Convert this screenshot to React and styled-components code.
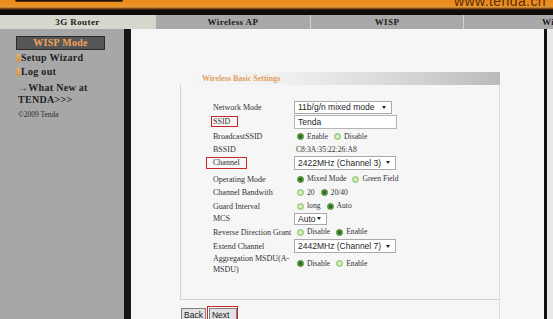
import React from "react";
import styled, { createGlobalStyle } from "styled-components";

const Global = createGlobalStyle`
  html, body { margin: 0; padding: 0; background: #f6f6f6; overflow: hidden; }
  body { font-family: "Liberation Serif", "Times New Roman", serif; }
  * { box-sizing: border-box; }
`;

const Page = styled.div`
  width: 553px;
  height: 319px;
  overflow: hidden;
  display: flex;
  flex-direction: column;
`;

const TopBanner = styled.div`
  height: 7px;
  flex: none;
  display: flex;
  align-items: flex-end;
  overflow: hidden;
  background: linear-gradient(180deg, #e98a1c 0%, #ec8f22 60%, #e7952f 100%);
`;

const LogoTab = styled.div`
  align-self: flex-start;
  margin-left: 15px;
  width: 108px;
  height: 2px;
  background: #1d1410;
  border: 1px solid #5a3210;
  border-top: none;
  border-radius: 0 0 4px 4px;
`;

const SiteUrl = styled.div`
  margin-left: auto;
  margin-right: 7px;
  font-family: "Liberation Sans", Arial, sans-serif;
  font-size: 14px;
  line-height: 12px;
  height: 12px;
  color: #5b2c06;
  letter-spacing: 0.4px;
  margin-bottom: 0px;
`;

const BlendBand = styled.div`
  height: 3px;
  flex: none;
  background: linear-gradient(180deg, #e0a040 0%, #6a3a10 60%, #1a120c 100%);
`;

const DarkBand = styled.div`
  height: 5px;
  flex: none;
  background: #0f0d0c;
`;

const TabBar = styled.div`
  height: 14px;
  flex: none;
  display: grid;
  grid-template-columns: 155px 155px 153px 1fr;
`;

const Tab = styled.div`
  background: ${(p) => (p.$active ? "#d7d7cd" : "#a9a9a9")};
  border-left: ${(p) => (p.$first ? "none" : "1px solid #d2d2d2")};
  color: #1c1c1c;
  font-weight: bold;
  font-size: 9px;
  letter-spacing: 0.4px;
  line-height: 14px;
  white-space: nowrap;
  overflow: hidden;
  padding-left: ${(p) => (p.$last ? "78px" : "0")};
  text-align: ${(p) => (p.$last ? "left" : "center")};
`;

const Body = styled.div`
  flex: 1;
  display: flex;
  min-height: 0;
`;

const Sidebar = styled.div`
  width: 124px;
  flex: none;
  background: #a7a7a7;
  padding: 7px 0 0 16px;
  display: flex;
  flex-direction: column;
  align-items: flex-start;
`;

const ModeBox = styled.div`
  width: 89px;
  height: 14px;
  background: #565656;
  border: 1px solid #2b2b2b;
  color: #f2a35a;
  font-weight: bold;
  font-size: 10px;
  letter-spacing: 0.3px;
  line-height: 12px;
  text-align: center;
`;

const NavLink = styled.div`
  display: flex;
  align-items: center;
  font-weight: bold;
  font-size: 10px;
  line-height: ${(p) => p.$lh || "14px"};
  margin-top: ${(p) => p.$mt || "0"};
  margin-left: ${(p) => p.$ml || "1px"};
  color: #1e1e1e;
  letter-spacing: 0.3px;
  white-space: nowrap;
`;

const Bullet = styled.span`
  width: 3px;
  height: 8px;
  background: linear-gradient(180deg, #f3b45a, #e48a2a);
  margin-right: 1px;
`;

const Copy = styled.div`
  margin: 3px 0 0 2px;
  font-size: 7.5px;
  line-height: 12px;
  color: #2a2a2a;
`;

const SideDivider = styled.div`
  width: 7px;
  flex: none;
  background: #161616;
`;

const Main = styled.div`
  flex: 1;
  background: #f6f6f6;
  padding: 43px 0 0 49px;
  display: flex;
  flex-direction: column;
`;

const RightRule = styled.div`
  width: 3px;
  flex: none;
  background: #121212;
`;

const RightStrip = styled.div`
  width: 6px;
  flex: none;
  background: #e9e9e9;
`;

const Panel = styled.div`
  width: 320px;
  flex: 1;
  display: flex;
  flex-direction: column;
`;

const PanelHeader = styled.div`
  height: 13px;
  background: linear-gradient(90deg, #f7f7f7 0%, #efefef 35%, #d2d2d2 75%, #bababa 100%);
  color: #e29c5c;
  font-weight: bold;
  font-size: 8px;
  line-height: 13px;
  padding-left: 22px;
  white-space: nowrap;
`;

const PanelBody = styled.div`
  border-left: 1px solid #d3d3d3;
  border-right: 1px solid #dedede;
  border-bottom: 1px solid #d3d3d3;
  padding: 15px 0 23px 32px;
`;

const FormRow = styled.div`
  display: grid;
  grid-template-columns: 81px 1fr;
  align-items: center;
  height: ${(p) => p.$h}px;
`;

const Label = styled.div`
  font-size: 8px;
  line-height: 11px;
  color: #333;
  white-space: ${(p) => (p.$wrap ? "normal" : "nowrap")};
`;

const RedBox = styled.span`
  display: inline-block;
  border: 1.5px solid #c4262a;
  margin-left: ${(p) => p.$ml}px;
  padding: 0 ${(p) => p.$pr}px 0 ${(p) => p.$pl}px;
  line-height: ${(p) => p.$lh}px;
`;

const Select = styled.div`
  width: ${(p) => p.$w}px;
  height: ${(p) => p.$h}px;
  background: #fff;
  border: 1px solid #a9a9a9;
  display: flex;
  align-items: center;
  justify-content: space-between;
  padding: 0 5px 0 3px;
  font-family: "Liberation Sans", Arial, sans-serif;
  font-size: 8.5px;
  color: #1f1f1f;
  white-space: nowrap;
`;

const Caret = styled.span`
  width: 0;
  height: 0;
  border-left: 2.5px solid transparent;
  border-right: 2.5px solid transparent;
  border-top: 3px solid #222;
`;

const TextInput = styled.div`
  width: 103px;
  height: 14px;
  background: #fff;
  border: 1px solid #b5b5b5;
  padding-left: 3px;
  font-family: "Liberation Sans", Arial, sans-serif;
  font-size: 8.5px;
  line-height: 12px;
  color: #1f1f1f;
`;

const RadioGroup = styled.div`
  display: flex;
  align-items: center;
  padding-left: 3px;
`;

const Radio = styled.span`
  width: 7px;
  height: 7px;
  border-radius: 50%;
  flex: none;
  margin-right: 3px;
  background: ${(p) =>
    p.$checked
      ? "radial-gradient(circle, #2f6a20 0 1.4px, #5aa63a 2px, #4a9432 100%)"
      : "radial-gradient(circle, #d9f0c8 0 1.2px, #a9d68a 2.4px, #98cb76 100%)"};
  border: 1px solid ${(p) => (p.$checked ? "#3f7f2b" : "#8fc56c")};
`;

const RadioText = styled.span`
  font-size: 7.6px;
  line-height: 10px;
  color: #333;
  margin-right: 6px;
  white-space: nowrap;
`;

const Plain = styled.div`
  font-size: 7.6px;
  line-height: 10px;
  color: #333;
  padding-left: 2px;
`;

const Footer = styled.div`
  flex: 1;
  border-right: 1px solid #dedede;
  padding: 6px 0 0 1px;
  display: flex;
  align-items: flex-start;
`;

const Button = styled.div`
  height: 14px;
  padding: 0 2px;
  background: #e2e2e2;
  border: 1px solid #808080;
  font-family: "Liberation Sans", Arial, sans-serif;
  font-size: 8.5px;
  line-height: 12px;
  color: #1a1a1a;
  margin-top: ${(p) => p.$mt || "0"};
`;

const NextMark = styled.div`
  margin-left: 1px;
  width: 31px;
  height: 16px;
  border: 1.5px solid #c4262a;
  padding: 1px 0 0 1px;
  background: #fff;
`;

function Choice({ options, checked }) {
  return (
    <RadioGroup>
      {options.map((o, i) => (
        <React.Fragment key={o}>
          <Radio $checked={i === checked} />
          <RadioText>{o}</RadioText>
        </React.Fragment>
      ))}
    </RadioGroup>
  );
}

function Drop({ w, h = 14, children }) {
  return (
    <Select $w={w} $h={h}>
      <span>{children}</span>
      <Caret />
    </Select>
  );
}

export default function App() {
  return (
    <Page>
      <Global />
      <TopBanner>
        <LogoTab />
        <SiteUrl>www.tenda.cn</SiteUrl>
      </TopBanner>
      <BlendBand />
      <DarkBand />
      <TabBar>
        <Tab $active $first>3G Router</Tab>
        <Tab>Wireless AP</Tab>
        <Tab>WISP</Tab>
        <Tab $last>Wireless Client</Tab>
      </TabBar>
      <Body>
        <Sidebar>
          <ModeBox>WISP Mode</ModeBox>
          <NavLink $mt="1px" $ml="1px"><Bullet />Setup Wizard</NavLink>
          <NavLink $ml="1px"><Bullet />Log out</NavLink>
          <NavLink $mt="3px" $lh="12px" $ml="2px">→What New at</NavLink>
          <NavLink $lh="12px" $ml="2px">TENDA&gt;&gt;&gt;</NavLink>
          <Copy>©2009 Tenda</Copy>
        </Sidebar>
        <SideDivider />
        <Main>
          <Panel>
            <PanelHeader>Wireless Basic Settings</PanelHeader>
            <PanelBody>
              <FormRow $h={14}>
                <Label>Network Mode</Label>
                <Drop w={98} h={13}>11b/g/n mixed mode</Drop>
              </FormRow>
              <FormRow $h={15}>
                <Label><RedBox $ml={-2} $pl={1} $pr={7} $lh={9}>SSID</RedBox></Label>
                <TextInput>Tenda</TextInput>
              </FormRow>
              <FormRow $h={15}>
                <Label>BroadcastSSID</Label>
                <Choice options={["Enable", "Disable"]} checked={0} />
              </FormRow>
              <FormRow $h={8}>
                <Label>BSSID</Label>
                <Plain>C8:3A:35:22:26:A8</Plain>
              </FormRow>
              <FormRow $h={21}>
                <Label><RedBox $ml={-7} $pl={6} $pr={6} $lh={10}>Channel</RedBox></Label>
                <Drop w={102}>2422MHz (Channel 3)</Drop>
              </FormRow>
              <FormRow $h={12}>
                <Label>Operating Mode</Label>
                <Choice options={["Mixed Mode", "Green Field"]} checked={0} />
              </FormRow>
              <FormRow $h={15}>
                <Label>Channel Bandwith</Label>
                <Choice options={["20", "20/40"]} checked={1} />
              </FormRow>
              <FormRow $h={12}>
                <Label>Guard Interval</Label>
                <Choice options={["long", "Auto"]} checked={1} />
              </FormRow>
              <FormRow $h={13}>
                <Label>MCS</Label>
                <Drop w={33} h={12}>Auto</Drop>
              </FormRow>
              <FormRow $h={14}>
                <Label>Reverse Direction Grant</Label>
                <Choice options={["Disable", "Enable"]} checked={1} />
              </FormRow>
              <FormRow $h={12}>
                <Label>Extend Channel</Label>
                <Drop w={102}>2442MHz (Channel 7)</Drop>
              </FormRow>
              <FormRow $h={25}>
                <Label $wrap>Aggregation MSDU(A-MSDU)</Label>
                <Choice options={["Disable", "Enable"]} checked={0} />
              </FormRow>
            </PanelBody>
            <Footer>
              <Button $mt="2px">Back</Button>
              <NextMark>
                <Button>Next</Button>
              </NextMark>
            </Footer>
          </Panel>
        </Main>
        <RightRule />
        <RightStrip />
      </Body>
    </Page>
  );
}
